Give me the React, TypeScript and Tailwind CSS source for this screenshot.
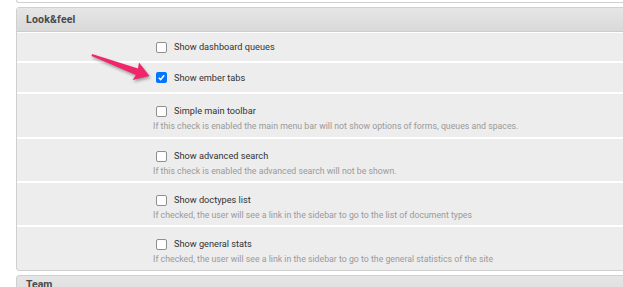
import React from 'react';

type Option = {
  label: string;
  help?: string;
  checked?: boolean;
};

const OPTIONS: Option[] = [
  { label: 'Show dashboard queues' },
  { label: 'Show ember tabs', checked: true },
  { label: 'Simple main toolbar', help: 'If this check is enabled the main menu bar will not show options of forms, queues and spaces.' },
  { label: 'Show advanced search', help: 'If this check is enabled the advanced search will not be shown.' },
  { label: 'Show doctypes list', help: 'If checked, the user will see a link in the sidebar to go to the list of document types' },
  { label: 'Show general stats', help: 'If checked, the user will see a link in the sidebar to go to the general statistics of the site' },
];

const Box: React.FC<{ checked?: boolean }> = ({ checked }) =>
  checked ? (
    <span className="w-[11px] h-[11px] rounded-[2px] bg-[#0075ff] flex items-center justify-center shrink-0">
      <svg width="9" height="9" viewBox="0 0 10 10">
        <path d="M2 5.2 L4.1 7.3 L8 2.6" fill="none" stroke="white" strokeWidth="1.7" />
      </svg>
    </span>
  ) : (
    <span className="w-[11px] h-[11px] rounded-[2px] bg-white border border-[#8f8f8f] shrink-0" />
  );

const Arrow: React.FC = () => (
  <svg
    className="absolute left-0 top-0 pointer-events-none"
    width="160"
    height="90"
    style={{ filter: 'drop-shadow(1px 2px 1.5px rgba(0,0,0,0.35))' }}
  >
    <polygon
      points="92,54 138,68.6 139,62.5 149.5,76 132.5,80 136,75 91.5,56"
      fill="#f0256a"
    />
  </svg>
);

export default function App() {
  return (
    <div
      className="relative w-[623px] h-[287px] overflow-hidden bg-white pl-4"
      style={{ fontFamily: 'Roboto, "Liberation Sans", sans-serif' }}
    >
      <div className="w-[640px] h-[3px] border-l border-b border-[#d0d0d0] rounded-bl-[3px] bg-white" />

      <div className="mt-1 w-[640px] border border-[#d0d0d0] rounded-[3px] bg-[#ededed]">
        <div className="h-[24px] flex items-center pl-[9px] bg-gradient-to-b from-[#e6e6e6] to-[#d9d9d9] border-b border-[#cdcdcd]">
          <span className="text-[10.5px] font-bold text-[#4a4a4a] tracking-[0.2px]">Look&amp;feel</span>
        </div>
        {OPTIONS.map((o, i) => (
          <div
            key={o.label}
            className={`border-t border-white border-b border-[#d6d6d6] last:border-b-0 pl-[136px] flex flex-col ${
              o.help ? (i === 2 ? 'h-[45px] pt-[10px]' : 'h-[44px] pt-[10px]') : i === 0 ? 'h-[30px] justify-center' : 'h-[31px] justify-center'
            }`}
          >
            <label className="flex items-center gap-[7px] pl-[3px] h-[14px] text-[9.2px] text-[#333]">
              <Box checked={o.checked} />
              <span>{o.label}</span>
            </label>
            {o.help && <div className="mt-[1px] h-[14px] leading-[14px] text-[8.75px] text-[#9a9a9a]">{o.help}</div>}
          </div>
        ))}
      </div>

      <div className="mt-1 w-[640px] h-[30px] border border-[#d0d0d0] rounded-[3px] bg-gradient-to-b from-[#e6e6e6] to-[#d9d9d9] pl-[9px] pt-[4px]">
        <div className="text-[10.5px] leading-none font-bold text-[#4a4a4a]">Team</div>
      </div>

      <Arrow />
    </div>
  );
}
